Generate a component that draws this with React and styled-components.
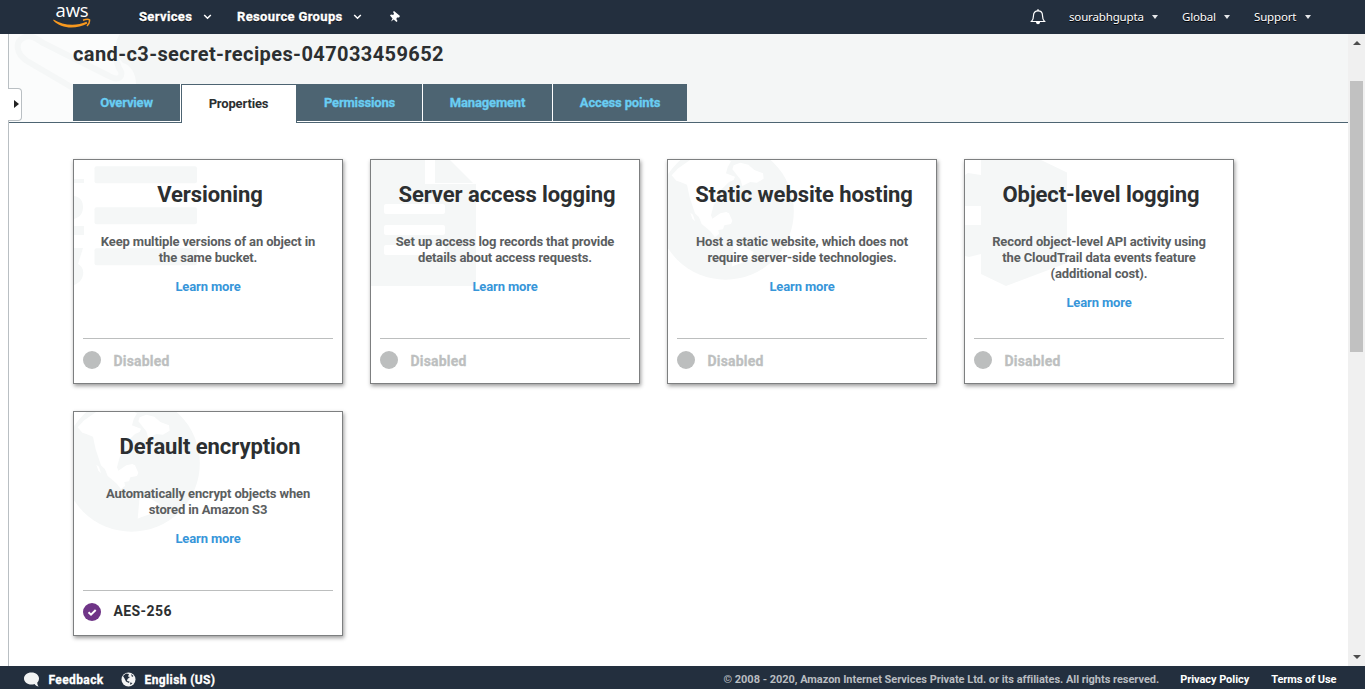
import React from 'react';
import styled, { createGlobalStyle, css } from 'styled-components';

const GlobalStyle = createGlobalStyle`
  * { box-sizing: border-box; }
  html, body { margin: 0; padding: 0; overflow: hidden; }
  body { font-family: Roboto, "Liberation Sans", sans-serif; background: #fff; color: #2c2f31; }
`;

const Page = styled.div`
  display: flex;
  flex-direction: column;
  width: 1365px;
  height: 689px;
  overflow: hidden;
`;

const TopBar = styled.header`
  display: flex;
  align-items: center;
  flex: 0 0 34px;
  background: #232f3e;
  color: #fff;
  text-shadow: 0 1px 0 #000;
`;

const Logo = styled.div`
  display: flex;
  flex-direction: column;
  align-items: center;
  width: 38px;
  height: 34px;
  margin-left: 53px;
  text-shadow: none;
`;

const LogoWord = styled.span`
  font: 500 18.5px/26px "Open Sans", "Noto Sans", sans-serif;
  letter-spacing: -0.2px;
  margin-top: -3px;
`;

const LogoSmile = styled.svg`
  width: 38px;
  height: 10px;
  margin-top: -5px;
  flex: none;
`;

const MainMenu = styled.nav`
  display: flex;
  align-items: center;
  margin-left: 48px;
  font-size: 13px;
  font-weight: 700;
  letter-spacing: 0.35px;
  -webkit-text-stroke: 0.3px #fff;
`;

const MenuLabel = styled.span`
  flex: none;
  width: ${(p) => p.$width}px;
  padding-bottom: 2px;
  white-space: nowrap;
`;

const Chevron = styled.svg`
  width: 9px;
  height: 6px;
  margin: 0 ${(p) => p.$after}px 0 10px;
`;

const Pin = styled.svg`
  width: 12px;
  height: 13px;
  margin-top: -2px;
`;

const UserMenu = styled.nav`
  display: flex;
  align-items: center;
  margin-left: auto;
  margin-right: 54px;
  font: 11.5px "Noto Sans", "Open Sans", sans-serif;
  letter-spacing: -0.15px;
`;

const Bell = styled.svg`
  width: 16px;
  height: 16px;
  margin-right: 23px;
`;

const Caret = styled.span`
  border: 3px solid transparent;
  border-top: 4px solid #e6e8ea;
  border-bottom: 0;
  margin: 0 ${(p) => p.$after}px 0 8px;
`;

const Body = styled.div`
  display: flex;
  flex: 1;
  min-height: 0;
`;

const Rail = styled.aside`
  width: 9px;
  border-right: 1px solid #b9bfc3;
  position: relative;
`;

const RailToggle = styled.button`
  position: absolute;
  left: 8px;
  top: 54px;
  width: 14px;
  height: 33px;
  padding: 0;
  display: flex;
  align-items: center;
  justify-content: flex-end;
  background: #fff;
  border: 1px solid #b9bfc3;
  border-left: 0;
  border-radius: 0 4px 4px 0;
  z-index: 2;

  &::after {
    content: '';
    border: 4px solid transparent;
    border-left: 5px solid #222;
    border-right: 0;
    margin: -1px 2px 0 0;
  }
`;

const Content = styled.main`
  flex: 1;
  min-width: 0;
`;

const Heading = styled.section`
  display: flex;
  flex-direction: column;
  justify-content: space-between;
  height: 89px;
  padding-left: 64px;
  background: #f4f6f6;
  border-bottom: 1px solid #4d6472;
  position: relative;
`;

const HeadingArt = styled.svg`
  position: absolute;
  left: 0;
  top: 0;
  width: 140px;
  height: 88px;
`;

const BucketName = styled.h1`
  margin: 8px 0 0;
  font-size: 20px;
  line-height: 24px;
  font-weight: 700;
  letter-spacing: 0.4px;
  position: relative;
`;

const Tabs = styled.div`
  display: flex;
  height: 39px;
  margin-bottom: -1px;
  position: relative;
`;

const Tab = styled.div`
  width: ${(p) => p.$width}px;
  height: 37px;
  display: flex;
  align-items: center;
  justify-content: center;
  font-size: 13px;
  font-weight: 700;
  letter-spacing: -0.15px;
  -webkit-text-stroke: 0.3px #69cdf3;
  white-space: nowrap;
  background: #4d6472;
  color: #69cdf3;
  border-right: ${(p) => (p.$divider ? '1px solid #fff' : '0')};
  box-shadow: 0 1px 0 #fff;
  ${(p) =>
    p.$active &&
    css`
      height: 39px;
      padding: 0 1px 1px 0;
      background: #fff;
      color: #2c2f31;
      border: 1px solid #4d6472;
      border-bottom: 0;
      box-shadow: none;
      -webkit-text-stroke: 0;
    `}
`;

const CardGrid = styled.section`
  display: grid;
  grid-template-columns: repeat(4, 270px);
  grid-auto-rows: 225px;
  gap: 27px;
  padding: 36px 0 0 64px;
`;

const CardBox = styled.article`
  display: flex;
  flex-direction: column;
  position: relative;
  padding: 0 9px;
  background: #fff;
  border: 1px solid #7d7f80;
  box-shadow: 1px 2px 4px rgba(0, 0, 0, 0.4);
`;

const CardArt = styled.svg`
  position: absolute;
  left: 0;
  top: 0;
  width: 140px;
  height: 140px;
`;

const CardTitle = styled.h2`
  margin: 21px 0 0;
  padding-left: 4px;
  font-size: 22px;
  line-height: 28px;
  font-weight: 700;
  letter-spacing: -0.08px;
  text-align: center;
  white-space: nowrap;
  position: relative;
`;

const CardText = styled.p`
  margin: 25px 0 0;
  font-size: 13px;
  line-height: 16px;
  font-weight: 700;
  letter-spacing: -0.13px;
  color: #5b5e5f;
  text-align: center;
  white-space: pre-line;
  position: relative;
`;

const LearnMore = styled.a`
  margin-top: 13px;
  font-size: 13px;
  line-height: 16px;
  font-weight: 700;
  letter-spacing: -0.13px;
  color: #3796d9;
  text-align: center;
  position: relative;
`;

const CardStatus = styled.footer`
  display: flex;
  align-items: center;
  height: 45px;
  margin-top: auto;
  border-top: 1px solid #bcbebe;
  font-size: 14px;
  font-weight: 700;
  letter-spacing: ${(p) => (p.$on ? '0.4px' : '0.2px')};
  color: ${(p) => (p.$on ? '#2c2f31' : '#bdbfbf')};
`;

const StatusLabel = styled.span`
  line-height: 18px;
  padding-bottom: ${(p) => (p.$on ? 4 : 0)}px;
  -webkit-text-stroke: ${(p) => (p.$on ? '0' : '0.3px #bdbfbf')};
`;

const StatusDot = styled.svg`
  width: 18px;
  height: 18px;
  margin: -2px 12.5px 0 0;
`;

const ScrollTrack = styled.div`
  display: flex;
  flex-direction: column;
  align-items: center;
  width: 17px;
  background: #f0f0f0;
`;

const ScrollArrow = styled.span`
  border: 4px solid transparent;
  ${(p) =>
    p.$up
      ? 'border-top: 0; border-bottom-color: #4d4d4d; margin-top: 7px;'
      : 'border-bottom: 0; border-top-color: #4d4d4d; margin: auto 0 7px;'}
`;

const ScrollThumb = styled.div`
  width: 13px;
  height: 271px;
  margin-top: 36px;
  background: #c1c1c1;
`;

const BottomBar = styled.footer`
  display: flex;
  align-items: center;
  flex: 0 0 23px;
  padding: 4px 28.5px 0 24px;
  background: #232f3e;
  color: #fff;
  font-size: 12px;
  font-weight: 700;
`;

const BottomIcon = styled.svg`
  width: 15px;
  height: 15px;
  margin: -1px ${(p) => p.$after}px 0 0;
`;

const BottomLink = styled.span`
  white-space: nowrap;
  font-size: ${(p) => (p.$small ? 11 : 12)}px;
  letter-spacing: ${(p) => (p.$small ? -0.05 : 0.38)}px;
  -webkit-text-stroke: ${(p) => (p.$small ? 0 : 0.3)}px #fff;
  margin-right: ${(p) => p.$after || 0}px;
  margin-top: ${(p) => (p.$small ? -1 : 0)}px;
`;

const Copyright = styled.span`
  margin: -1px 21px 0 auto;
  font-size: 11px;
  letter-spacing: -0.03px;
  color: #b9bdc1;
  white-space: nowrap;
`;

const ART_FILL = '#f5f7f7';

const art = {
  list: (
    <g fill={ART_FILL}>
      <rect x="20.500" y="6.300" width="102.500" height="17" rx="2" />
      <rect x="20.500" y="47.300" width="102.500" height="17" rx="2" />
      <rect x="20.500" y="88.300" width="102.500" height="17" rx="2" />
      <path d="M0 19h10v4H0zM0 36C7 37 9 42 9 47S7 57 0 59zM0 66h10v9H0zM0 88h9L4 104C8 106 10 110 9 115S5 123 0 125z" />
    </g>
  ),
  page: (
    <g>
      <path fill={ART_FILL} d="M0 0H54V24H105V126H0zM64 0H79L102 23H64z" />
      <path fill="#fff" d="M15 44H72Q74 44 74 46V52Q74 54 72 54H15Q13 54 13 52V46Q13 44 15 44zM15 65H72Q74 65 74 67V73Q74 75 72 75H15Q13 75 13 73V67Q13 65 15 65zM15 85H72Q74 85 74 87V93Q74 95 72 95H15Q13 95 13 93V87Q13 85 15 85z" />
    </g>
  ),
  globe: (
    <g transform="translate(-13 -10) scale(.3333)">
      <circle cx="211.500" cy="184" r="205" fill={ART_FILL} />
      <path
        fill="#fff"
        d="M50 76L68 56L88 42L108 28H216L228 34L218 52L213 70L226 75L240 80L236 90L222 96L200 118L188 132L190 148L176 166L168 196L172 206L196 190L214 186L222 190L232 212L228 222L208 226L204 238L190 240L192 252L180 262L166 244L140 222L132 202L120 190L104 142L96 104L76 96L64 92Z M236 46L256 38L280 44L298 60L324 70L326 86L306 98L286 96L262 108L256 88L232 58Z M106 188L114 194L120 214L112 206Z M236 282L264 288L296 306L290 322L262 338L240 346L230 350L232 330Z"
      />
    </g>
  ),
  cube: (
    <path fill={ART_FILL} d="M16 0H76L102 12.500V103L41 126L16 114V94L4 97L0 96V65H16V46H0V15L3 13L16 15z" />
  ),
};

const cards = [
  { title: 'Versioning', art: 'list', text: 'Keep multiple versions of an object in\nthe same bucket.' },
  { title: 'Server access logging', art: 'page', text: 'Set up access log records that provide\ndetails about access requests.' },
  { title: 'Static website hosting', art: 'globe', text: 'Host a static website, which does not\nrequire server-side technologies.' },
  { title: 'Object-level logging', art: 'cube', text: 'Record object-level API activity using\nthe CloudTrail data events feature\n(additional cost).' },
  { title: 'Default encryption', art: 'globe', text: 'Automatically encrypt objects when\nstored in Amazon S3', status: 'AES-256' },
];

const tabs = [
  { label: 'Overview', width: 108, divider: true },
  { label: 'Properties', width: 116, active: true },
  { label: 'Permissions', width: 126, divider: true },
  { label: 'Management', width: 130, divider: true },
  { label: 'Access points', width: 134 },
];

function Card({ title, text, art: name, status }) {
  return (
    <CardBox>
      <CardArt viewBox="0 0 140 140">{art[name]}</CardArt>
      <CardTitle>{title}</CardTitle>
      <CardText>{text}</CardText>
      <LearnMore>Learn more</LearnMore>
      <CardStatus $on={!!status}>
        <StatusDot viewBox="0 0 18 18">
          <circle cx="9" cy="9" r="9" fill={status ? '#6f3587' : '#bcbebe'} />
          {status && <path d="M5.500 9.300L8 11.700L12.700 7" fill="none" stroke="#fff" strokeWidth="2" />}
        </StatusDot>
        <StatusLabel $on={!!status}>{status || 'Disabled'}</StatusLabel>
      </CardStatus>
    </CardBox>
  );
}

function DownChevron({ after }) {
  return (
    <Chevron viewBox="0 0 9 6" $after={after}>
      <path d="M1.200 1L4.500 4.300L7.800 1" fill="none" stroke="#fff" strokeWidth="1.500" />
    </Chevron>
  );
}

export default function App() {
  return (
    <Page>
      <GlobalStyle />
      <TopBar>
        <Logo>
          <LogoWord>aws</LogoWord>
          <LogoSmile viewBox="0 0 38 10">
            <path d="M0.500 1.500C10 7.500 23 8.500 33.500 3.800L34.400 5.400C23 11.500 8 10.800 0.300 2.400Z" fill="#f7981f" />
            <path d="M30 2.200C33 1.200 35.500 1.200 36.500 1.800C36.800 4 35.500 6.500 34 8" fill="none" stroke="#f7981f" strokeWidth="1.500" />
          </LogoSmile>
        </Logo>
        <MainMenu>
          <MenuLabel $width={54}>Services</MenuLabel>
          <DownChevron after={25} />
          <MenuLabel $width={106}>Resource Groups</MenuLabel>
          <DownChevron after={27} />
          <Pin viewBox="0 0 12 13">
            <path d="M5 1L11 6L10 7.500L8 7.500L7.300 9L8.500 11L7.500 12L4.700 9.500L2 11.500L3.500 8.500L1 5.500L2 4.500L4.300 5L5 3.500L4 2Z" fill="#fff" />
          </Pin>
        </MainMenu>
        <UserMenu>
          <Bell viewBox="0 0 16 16">
            <path d="M1.500 12.500C3.500 10.500 3.500 9 3.500 6.500C3.500 3.500 5.500 1.800 8 1.800S12.500 3.500 12.500 6.500C12.500 9 12.500 10.500 14.500 12.500Z" fill="none" stroke="#fff" strokeWidth="1.200" />
            <path d="M6 13H10C10 16 6 16 6 13ZM7.300 0.300H8.700V2H7.300Z" fill="#fff" />
          </Bell>
          <MenuLabel $width={75}>sourabhgupta</MenuLabel>
          <Caret $after={24} />
          <MenuLabel $width={34}>Global</MenuLabel>
          <Caret $after={24} />
          <MenuLabel $width={43}>Support</MenuLabel>
          <Caret $after={0} />
        </UserMenu>
      </TopBar>
      <Body>
        <Rail>
          <RailToggle aria-label="Expand navigation" />
        </Rail>
        <Content>
          <Heading>
            <HeadingArt viewBox="0 0 140 88">
              <path d="M0 0H111C107 6 105 13 108 22L114 29C122 31 127 40 127 50V88H0Z" fill="#fbfcfc" />
              <path d="M64 54L18 27C7 20 6 8 14 4C21 0 27 4 34 9L100 42C110 48 116 42 110 34L107 26" fill="none" stroke="#f5f7f7" strokeWidth="6" />
            </HeadingArt>
            <BucketName>cand-c3-secret-recipes-047033459652</BucketName>
            <Tabs>
              {tabs.map((t) => (
                <Tab key={t.label} $width={t.width} $active={t.active} $divider={t.divider}>
                  {t.label}
                </Tab>
              ))}
            </Tabs>
          </Heading>
          <CardGrid>
            {cards.map((c) => (
              <Card key={c.title} {...c} />
            ))}
          </CardGrid>
        </Content>
        <ScrollTrack>
          <ScrollArrow $up />
          <ScrollThumb />
          <ScrollArrow />
        </ScrollTrack>
      </Body>
      <BottomBar>
        <BottomIcon $after={9.5} viewBox="0 0 15 15">
          <path d="M7.500 0.500C3 0.500 0 3.200 0 6.500S3 12.500 7.500 12.500C8.500 12.500 9.500 12.400 10.500 12C11.500 13.500 13 14.300 14.700 14.500C13.700 13.500 13.200 12 13.300 10.500C14.400 9.500 15 8 15 6.500C15 3.200 12 0.500 7.500 0.500Z" fill="#f2f3f3" />
        </BottomIcon>
        <BottomLink $after={17.5}>Feedback</BottomLink>
        <BottomIcon $after={8.5} viewBox="0 0 15 15">
          <circle cx="7.500" cy="7.500" r="7" fill="#f2f3f3" />
          <path d="M2 4L5 1.500L8 2L7 4.500L9 5L6.500 7L6 9L8.500 9.500L8 11L5 9.500L3.500 6.500ZM10 2L12.500 4L11 5ZM9 10.500L11.500 11L9.500 13Z" fill="#232f3e" />
        </BottomIcon>
        <BottomLink>English (US)</BottomLink>
        <Copyright>© 2008 - 2020, Amazon Internet Services Private Ltd. or its affiliates. All rights reserved.</Copyright>
        <BottomLink $small $after={22}>Privacy Policy</BottomLink>
        <BottomLink $small>Terms of Use</BottomLink>
      </BottomBar>
    </Page>
  );
}
